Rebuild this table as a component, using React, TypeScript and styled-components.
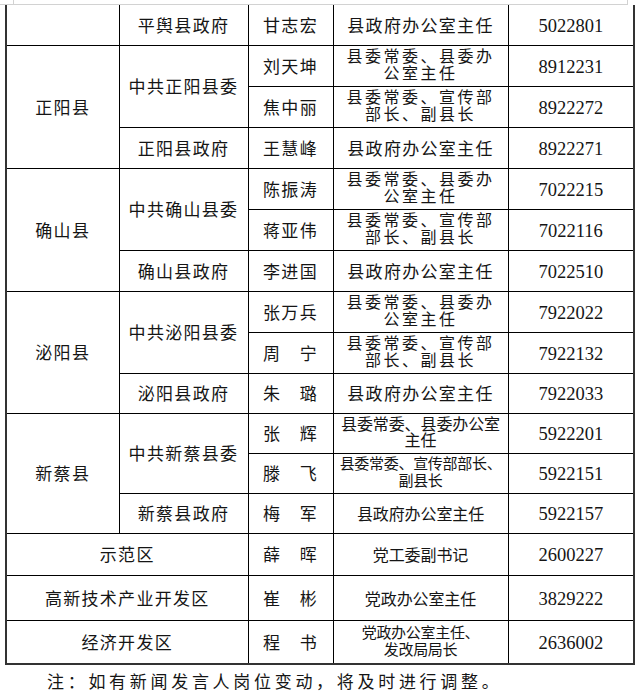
import * as React from "react";
import styled, { createGlobalStyle } from "styled-components";

const GlobalStyle = createGlobalStyle`
  html, body { margin: 0; padding: 0; background: #fff; }
  body {
    font-family: "Noto Sans CJK SC", "Noto Sans", sans-serif;
    color: #151515;
  }
`;

const Page = styled.div`
  width: 640px;
  height: 695px;
  overflow: hidden;
`;

const CropMark = styled.div`
  width: 628px;
  height: 4px;
  border-bottom: 1px solid #d2d2d2;
`;

const CropInner = styled.div`
  margin-left: 13px;
  width: 613px;
  height: 4px;
  border-left: 1px solid #d2d2d2;
  border-right: 1px solid #d2d2d2;
`;

const Sheet = styled.table`
  margin-left: 5px;
  width: 628px;
  table-layout: fixed;
  border-collapse: collapse;
  border-left: 2px solid #333;
  border-right: 2px solid #333;
  border-bottom: 2px solid #333;
`;

const Col = styled.col<{ $w: number }>`
  width: ${(p) => p.$w}px;
`;

const Row = styled.tr<{ $h: number }>`
  height: ${(p) => p.$h}px;
`;

const Cell = styled.td<{ $open?: boolean }>`
  border: 1px solid #000;
  border-top: ${(p) => (p.$open ? "none" : "1px solid #000")};
  padding: 0;
  text-align: center;
  vertical-align: middle;
`;

type Fit = "wide" | "plain" | "squeeze";

const sizes: Record<Fit, { size: number; spacing: number }> = {
  wide: { size: 17, spacing: 1.3 },
  plain: { size: 16, spacing: -0.1 },
  squeeze: { size: 15, spacing: -0.3 },
};

const Text = styled.span<{ $fit?: Fit; $lines?: number }>`
  display: inline-block;
  font-size: ${(p) => (p.$lines && p.$lines > 1 && (p.$fit ?? "wide") === "wide" ? 16 : sizes[p.$fit ?? "wide"].size)}px;
  letter-spacing: ${(p) => (p.$lines && p.$lines > 1 && (p.$fit ?? "wide") === "wide" ? 2.5 : sizes[p.$fit ?? "wide"].spacing)}px;
  line-height: ${(p) => (p.$lines && p.$lines > 1 ? "16.5px" : "20px")};
  white-space: nowrap;
`;

const Phone = styled.span`
  font-family: "Liberation Serif", "Times New Roman", serif;
  font-size: 18.5px;
  line-height: 1;
`;

const Note = styled.p`
  margin: 6px 0 0 47px;
  font-size: 17px;
  letter-spacing: 3.7px;
  line-height: 20px;
  white-space: nowrap;
`;

type Person = {
  name: string;
  title: string[];
  fit?: Fit;
  phone: string;
  h: number;
};

type County = {
  county: string;
  party: string;
  gov: string;
  members: Person[];
  govRow: Person;
};

const counties: County[] = [
  {
    county: "正阳县",
    party: "中共正阳县委",
    gov: "正阳县政府",
    members: [
      { name: "刘天坤", title: ["县委常委、县委办", "公室主任"], phone: "8912231", h: 41 },
      { name: "焦中丽", title: ["县委常委、宣传部", "部长、副县长"], phone: "8922272", h: 41 },
    ],
    govRow: { name: "王慧峰", title: ["县政府办公室主任"], phone: "8922271", h: 41 },
  },
  {
    county: "确山县",
    party: "中共确山县委",
    gov: "确山县政府",
    members: [
      { name: "陈振涛", title: ["县委常委、县委办", "公室主任"], phone: "7022215", h: 41 },
      { name: "蒋亚伟", title: ["县委常委、宣传部", "部长、副县长"], phone: "7022116", h: 41 },
    ],
    govRow: { name: "李进国", title: ["县政府办公室主任"], phone: "7022510", h: 41 },
  },
  {
    county: "泌阳县",
    party: "中共泌阳县委",
    gov: "泌阳县政府",
    members: [
      { name: "张万兵", title: ["县委常委、县委办", "公室主任"], phone: "7922022", h: 41 },
      { name: "周　宁", title: ["县委常委、宣传部", "部长、副县长"], phone: "7922132", h: 41 },
    ],
    govRow: { name: "朱　璐", title: ["县政府办公室主任"], phone: "7922033", h: 40 },
  },
  {
    county: "新蔡县",
    party: "中共新蔡县委",
    gov: "新蔡县政府",
    members: [
      { name: "张　辉", title: ["县委常委、县委办公室", "主任"], fit: "plain", phone: "5922201", h: 40 },
      { name: "滕　飞", title: ["县委常委、宣传部部长、", "副县长"], fit: "squeeze", phone: "5922151", h: 40 },
    ],
    govRow: { name: "梅　军", title: ["县政府办公室主任"], fit: "plain", phone: "5922157", h: 40 },
  },
];

const zones: (Person & { zone: string })[] = [
  { zone: "示范区", name: "薛　晖", title: ["党工委副书记"], fit: "plain", phone: "2600227", h: 42 },
  { zone: "高新技术产业开发区", name: "崔　彬", title: ["党政办公室主任"], fit: "plain", phone: "3829222", h: 45 },
  { zone: "经济开发区", name: "程　书", title: ["党政办公室主任、", "发改局局长"], fit: "squeeze", phone: "2636002", h: 44 },
];

const Title = ({ lines, fit }: { lines: string[]; fit?: Fit }) => (
  <Text $fit={fit} $lines={lines.length}>
    {lines.join("\n")
      .split("\n")
      .map((l, i) => (
        <React.Fragment key={i}>
          {i > 0 && <br />}
          {l}
        </React.Fragment>
      ))}
  </Text>
);

const PersonCells = ({ p }: { p: Person }) => (
  <>
    <Cell>
      <Text>{p.name}</Text>
    </Cell>
    <Cell>
      <Title lines={p.title} fit={p.fit} />
    </Cell>
    <Cell>
      <Phone>{p.phone}</Phone>
    </Cell>
  </>
);

export default function App() {
  return (
    <Page>
      <GlobalStyle />
      <CropMark>
        <CropInner />
      </CropMark>
      <Sheet>
        <colgroup>
          <Col $w={113} />
          <Col $w={129} />
          <Col $w={85} />
          <Col $w={175} />
          <Col $w={126} />
        </colgroup>
        <tbody>
          <Row $h={40}>
            <Cell $open />
            <Cell $open>
              <Text>平舆县政府</Text>
            </Cell>
            <Cell $open>
              <Text>甘志宏</Text>
            </Cell>
            <Cell $open>
              <Text>县政府办公室主任</Text>
            </Cell>
            <Cell $open>
              <Phone>5022801</Phone>
            </Cell>
          </Row>
          {counties.map((c) => (
            <React.Fragment key={c.county}>
              <Row $h={c.members[0].h}>
                <Cell rowSpan={3}>
                  <Text>{c.county}</Text>
                </Cell>
                <Cell rowSpan={2}>
                  <Text>{c.party}</Text>
                </Cell>
                <PersonCells p={c.members[0]} />
              </Row>
              <Row $h={c.members[1].h}>
                <PersonCells p={c.members[1]} />
              </Row>
              <Row $h={c.govRow.h}>
                <Cell>
                  <Text>{c.gov}</Text>
                </Cell>
                <PersonCells p={c.govRow} />
              </Row>
            </React.Fragment>
          ))}
          {zones.map((z) => (
            <Row $h={z.h} key={z.zone}>
              <Cell colSpan={2}>
                <Text>{z.zone}</Text>
              </Cell>
              <PersonCells p={z} />
            </Row>
          ))}
        </tbody>
      </Sheet>
      <Note>注：如有新闻发言人岗位变动，将及时进行调整。</Note>
    </Page>
  );
}
